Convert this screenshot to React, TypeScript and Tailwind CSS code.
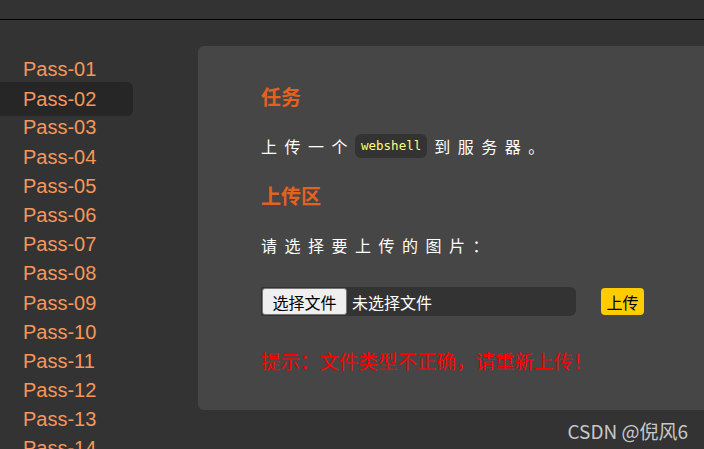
import React from 'react';

const passes = Array.from({ length: 14 }, (_, i) => `Pass-${String(i + 1).padStart(2, '0')}`);

const cjk = "font-['Noto_Sans_CJK_SC',sans-serif]";

const Sidebar: React.FC<{ active: number }> = ({ active }) => (
  <ul className="w-[133px] shrink-0 pt-[35px] font-['Liberation_Sans',Arial,sans-serif] text-[20px] text-[#f5975a]">
    {passes.map((p, i) => (
      <li
        key={p}
        className={
          i === active
            ? 'h-[34px] leading-[34px] -my-[2.4px] relative pl-[23px] rounded-r-md bg-[#262626]'
            : 'h-[29.2px] leading-[29.2px] pl-[23px]'
        }
      >
        {p}
      </li>
    ))}
  </ul>
);

const App: React.FC = () => {
  return (
    <div className="relative w-[704px] h-[449px] overflow-hidden bg-[#333333]">
      <div className="h-[20px] border-b border-black" />
      <div className="flex">
        <Sidebar active={1} />
        <div className={`ml-[65px] mt-[26px] w-[560px] h-[364px] shrink-0 rounded-l-md bg-[#464646] pl-[63px] pt-[37px] ${cjk}`}>
          <h2 className="h-[28px] leading-[28px] text-[20px] font-bold text-[#e4621f]">任务</h2>
          <p className="mt-[23px] h-[24px] flex items-center text-[16px] tracking-[7.5px] text-white">
            <span>上传一个</span>
            <code className="h-[24px] px-[6px] rounded-md bg-[#333333] text-[12.5px] font-normal leading-[24px] tracking-normal text-[#ffff77] font-['DejaVu_Sans_Mono',monospace]">
              webshell
            </code>
            <span className="ml-[7px]">到服务器。</span>
          </p>
          <h2 className="mt-[24px] h-[28px] leading-[28px] text-[20px] font-bold text-[#e4621f]">上传区</h2>
          <p className="mt-[23px] h-[24px] leading-[24px] text-[16px] tracking-[7.5px] text-white">请选择要上传的图片：</p>
          <div className="mt-[30px] flex items-center">
            <div className="w-[315px] h-[29px] flex items-center rounded-r-md bg-[#333333]">
              <button className="ml-[1px] h-[27px] w-[85px] rounded-[3px] border border-[#767676] bg-[#efefef] text-[16px] text-black">
                选择文件
              </button>
              <span className="ml-[5px] text-[16px] text-white">未选择文件</span>
            </div>
            <button className="ml-[25px] h-[27px] w-[43px] rounded-[4px] bg-[#ffcc00] text-[16px] text-black">上传</button>
          </div>
          <p className="mt-[31px] h-[28px] leading-[28px] text-[19.5px] text-[#ff0000]">提示：文件类型不正确，请重新上传！</p>
        </div>
      </div>
      <div className={`absolute right-[16px] top-[417px] text-[19px] text-[#c8c8c8] ${cjk}`}>CSDN @倪风6</div>
    </div>
  );
};

export default App;
